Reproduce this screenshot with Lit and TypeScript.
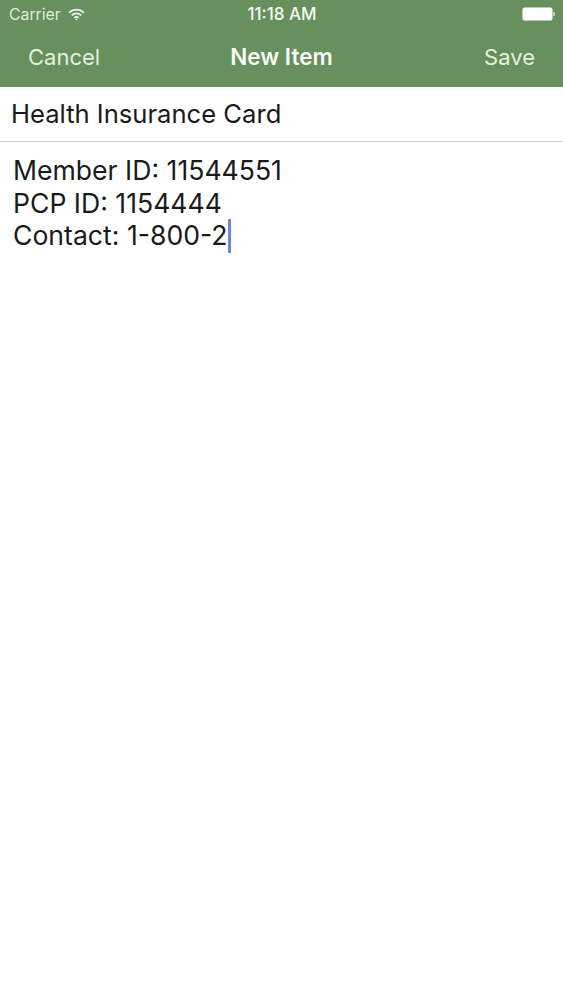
import { LitElement, html, css } from "lit";
import { customElement } from "lit/decorators.js";

@customElement("app-root")
export class AppRoot extends LitElement {
  static styles = css`
    :host {
      display: block;
      width: 563px;
      height: 1000px;
      background: #fff;
      font-family: Inter, "Liberation Sans", sans-serif;
      color: #1a1a1a;
      overflow: hidden;
    }
    .header {
      background: #688f5e;
      height: 87px;
      display: flex;
      flex-direction: column;
    }
    .status {
      height: 28px;
      display: grid;
      grid-template-columns: 1fr auto 1fr;
      align-items: center;
      padding: 0 8px 0 9px;
      color: #e9f3e4;
      font-size: 15.8px;
    }
    .status-left { display: flex; align-items: center; gap: 7px; }
    .carrier { color: #dfeeda; }
    .time { color: #f6faf4; font-weight: 500; font-size: 17px; }
    .status-right { display: flex; justify-content: flex-end; }
    .nav {
      flex: 1;
      display: grid;
      grid-template-columns: 1fr auto 1fr;
      align-items: center;
      padding: 0 28px 2px;
      font-size: 22px;
    }
    .nav .side { color: #e2f2dc; }
    .nav .save { text-align: right; }
    .nav .title { color: #f8fbf6; font-weight: 600; font-size: 22.5px; }
    .name {
      height: 53px;
      padding-bottom: 1px;
      display: flex;
      align-items: center;
      padding-left: 11px;
      font-size: 25.6px;
      border-bottom: 1px solid #cfcfcf;
      box-sizing: content-box;
    }
    .body {
      padding: 12px 13px;
      font-size: 26.6px;
      line-height: 32.5px;
    }
    .caret {
      display: inline-block;
      width: 3px;
      height: 34px;
      background: #6f86cf;
      vertical-align: -8px;
      margin-left: 0;
    }
  `;

  render() {
    return html`
      <div class="header">
        <div class="status">
          <div class="status-left">
            <span class="carrier">Carrier</span>
            <svg width="17" height="13" viewBox="0 0 16 12" fill="none" stroke="#eef6ea" stroke-width="1.7">
              <path d="M1 4.2C5 .6 11 .6 15 4.2" />
              <path d="M3.5 6.8C6.2 4.4 9.8 4.4 12.5 6.8" />
              <path d="M6 9.2C7.2 8.2 8.8 8.2 10 9.2" />
              <circle cx="8" cy="10.8" r="0.9" fill="#eef6ea" stroke="none" />
            </svg>
          </div>
          <div class="time">11:18 AM</div>
          <div class="status-right">
            <svg width="33" height="14" viewBox="0 0 33 14">
              <rect x="0.5" y="0.5" width="30" height="13" rx="2" fill="#fff" />
              <rect x="31.3" y="5" width="1.5" height="4" rx="0.7" fill="#dfe9db" />
            </svg>
          </div>
        </div>
        <div class="nav">
          <span class="side">Cancel</span>
          <span class="title">New Item</span>
          <span class="side save">Save</span>
        </div>
      </div>
      <div class="name">Health Insurance Card</div>
      <div class="body">
        <div>Member ID: 11544551</div>
        <div>PCP ID: 1154444</div>
        <div>Contact: 1-800-2<span class="caret"></span></div>
      </div>
    `;
  }
}
